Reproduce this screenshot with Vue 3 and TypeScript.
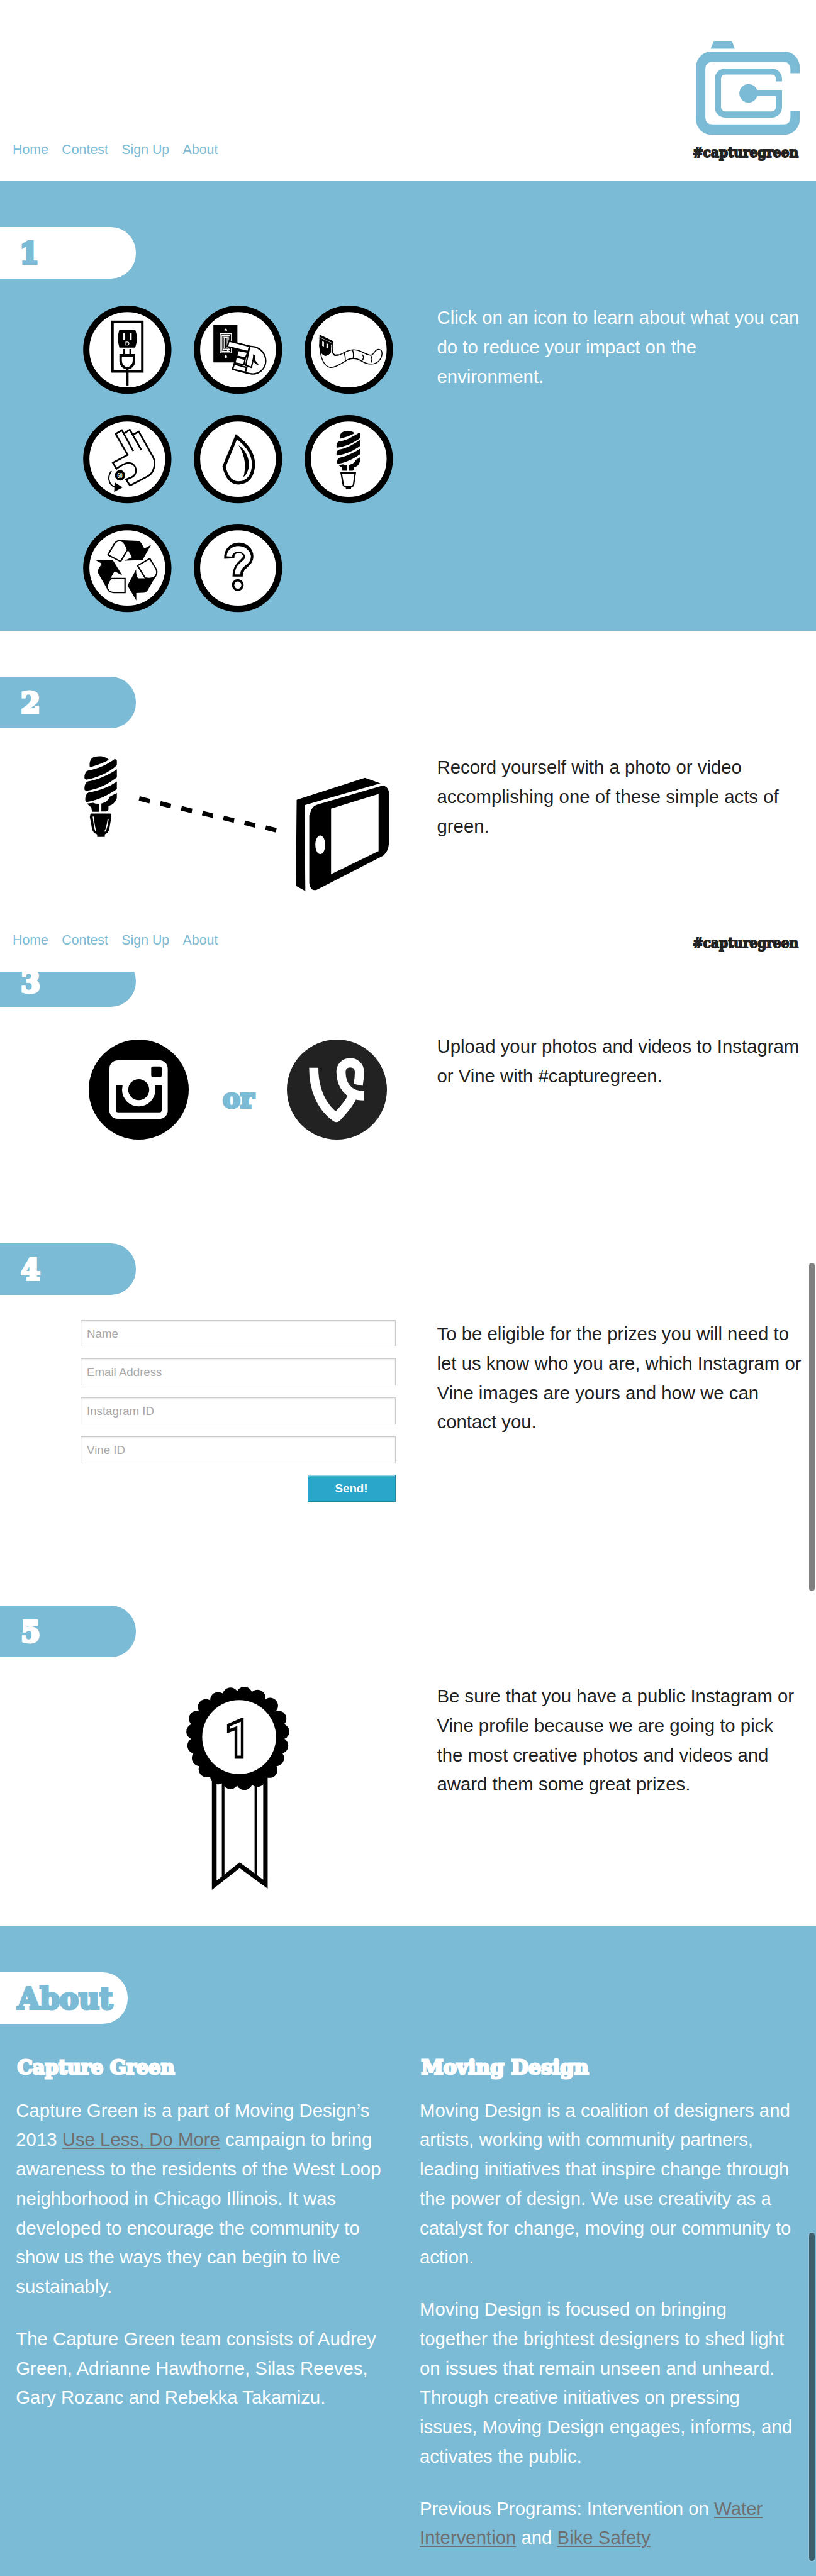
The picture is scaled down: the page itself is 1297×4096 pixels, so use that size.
<script setup lang="ts">
const nav: string[] = ['Home', 'Contest', 'Sign Up', 'About']
const fields: string[] = ['Name', 'Email Address', 'Instagram ID', 'Vine ID']

const copy = {
  act: 'Click on an icon to learn about what you can\ndo to reduce your impact on the\nenvironment.',
  record: 'Record yourself with a photo or video\naccomplishing one of these simple acts of\ngreen.',
  upload: 'Upload your photos and videos to Instagram\nor Vine with #capturegreen.',
  signup:
    'To be eligible for the prizes you will need to\nlet us know who you are, which Instagram or\nVine images are yours and how we can\ncontact you.',
  prize:
    'Be sure that you have a public Instagram or\nVine profile because we are going to pick\nthe most creative photos and videos and\naward them some great prizes.',
  team: 'The Capture Green team consists of Audrey\nGreen, Adrianne Hawthorne, Silas Reeves,\nGary Rozanc and Rebekka Takamizu.',
  coalition:
    'Moving Design is a coalition of designers and\nartists, working with community partners,\nleading initiatives that inspire change through\nthe power of design. We use creativity as a\ncatalyst for change, moving our community to\naction.',
  focus:
    'Moving Design is focused on bringing\ntogether the brightest designers to shed light\non issues that remain unseen and unheard.\nThrough creative initiatives on pressing\nissues, Moving Design engages, informs, and\nactivates the public.',
}

// Dashes of the line between the bulb and the phone
const dashes: number[] = [0, 1, 2, 3, 4, 5, 6]

// Centres of the scallops round the rosette
const scallops: [number, number][] = [
  [832, 562], [785, 597], [751, 654], [741, 718], [745, 787], [762, 848], [788, 903],
  [832, 938], [879, 961], [932, 966], [982, 950], [1028, 906], [1053, 848], [1069, 787],
  [1073, 718], [1062, 654], [1030, 590], [982, 551], [932, 536], [879, 540],
]
</script>

<template>
  <div class="page">
    <header class="top top--full">
      <nav class="nav">
        <a v-for="n in nav" :key="n">{{ n }}</a>
      </nav>
      <div class="brand">
        <svg class="logo" viewBox="174 111 744 671" preserveAspectRatio="none">
          <path d="M302 111H432L452 167H280Z" />
          <path
            d="M918 342H850V310Q848 264 804 262H290Q244 264 242 310V660Q244 706 290 708H804Q848 706 850 660V610H918V664C918 730 870 782 808 782H284C222 782 174 730 174 664V306C174 240 222 187 284 187H808C870 187 918 240 918 306Z"
          />
          <path
            d="M790 401H746V384Q746 354 716 352H385Q356 354 354 384V585Q356 613 385 615H716Q744 613 746 585V507H613A66 66 0 1 1 612 462H790V587C788 630 756 659 718 659H384C344 659 312 630 310 587V381C312 338 344 309 384 309H718C756 309 788 338 790 381Z"
          />
        </svg>
        <svg class="tag" width="172" height="34">
          <text class="slab dark" x="2" y="22" font-size="22.5" textLength="168" lengthAdjust="spacingAndGlyphs">#capturegreen</text>
        </svg>
      </div>
    </header>

    <section class="step step--one blue">
      <div class="pill pill--white">
        <svg width="216" height="81">
          <text class="slab" x="31" y="58" font-size="47" textLength="31" lengthAdjust="spacingAndGlyphs">1</text>
        </svg>
      </div>
      <div class="row">
        <div class="art icons">
          <svg class="icon" viewBox="37 58 424 412" preserveAspectRatio="none">
            <ellipse class="ring" cx="249" cy="264" rx="196.500" ry="191" />
            <rect class="line" x="178" y="134" width="143" height="231" stroke-width="12" />
            <path d="M211 170H287Q303 212 287 254H211Q197 212 211 170Z" />
            <path class="white" d="M230 186h9v32h-9zM261 186h9v32h-9z" />
            <path d="M242 228h10q5 2 5 7t-5 7h-10z" fill="none" stroke="#fff" stroke-width="3.500" />
            <path d="M230 261h9v28h-9zM259 261h9v28h-9z" />
            <path class="line" d="M217 290H281V316A32 34 0 0 1 217 316Z" stroke-width="12" />
            <path d="M243 350h12v81h-12z" />
          </svg>
          <svg class="icon" viewBox="566 58 424 412" preserveAspectRatio="none">
            <ellipse class="ring" cx="778" cy="264" rx="196.500" ry="191" />
            <path d="M660 147h115v176h-115z" />
            <circle class="white" cx="719" cy="172" r="6.500" />
            <circle class="white" cx="719" cy="297" r="6.500" />
            <path d="M715 176l8-8M715 301l8-8" stroke="#000" stroke-width="2.500" />
            <path d="M693 189h53v90h-53zM701 197h38v74h-38zM707 205h25v67M707 205v67M713 207h13v50h-13zM707 262h32M715 262v10M727 262v10" fill="none" stroke="#fff" stroke-width="3.500" />
            <path class="line" stroke-width="6.500" d="M735 224L833 248Q848 250 858 251C892 260 911 288 911 318C909 352 882 377 848 377Q835 377 752 355L779 266L826 273L727 249Z" />
            <path class="line" stroke-width="6.500" d="M735 224L833 248L826 273L727 249ZM779 267L825 276L813 303L771 293ZM769 298L812 309L806 334L763 326ZM760 331L820 347L813 369L752 355Z" />
            <path class="line" stroke-width="6.500" d="M834 248L815 337L842 346L856 288Q848 325 875 332" />
            <path d="M815 345L821 347L816 370L809 369ZM850 286l8 3q-3 28 18 42l-4 3q-18-8-22-22z" />
          </svg>
          <svg class="icon" viewBox="1095 58 424 412" preserveAspectRatio="none">
            <ellipse class="ring" cx="1307" cy="264" rx="196.500" ry="191" />
            <path class="line" stroke-width="4.500" d="M1228 235C1224 275 1232 298 1262 288C1290 277 1312 258 1350 267C1380 275 1398 293 1416 289C1430 285 1430 262 1450 262C1475 264 1468 300 1450 318C1430 336 1395 334 1370 318C1345 302 1315 300 1290 318C1260 336 1235 350 1215 346C1180 336 1170 290 1168 240" />
            <path class="line" stroke-width="4.500" d="M1283 277Q1292 292 1290 318M1325 265Q1332 285 1328 303M1370 285Q1386 300 1368 318M1412 291Q1423 307 1413 325" />
            <path d="M1167 193L1233 224L1230 236L1222 240V276Q1208 293 1193 293Q1168 284 1165 245Z" />
            <path d="M1170 207L1226 233" stroke="#fff" stroke-width="2" />
            <path d="M1230 228C1228 275 1232 290 1248 286L1262 285Q1246 298 1234 290Q1224 280 1224 240Z" />
            <path class="white" d="M1180 225l8 3v21l-8-3zM1200 234l8 3v21l-8-3z" />
          </svg>
          <svg class="icon" viewBox="37 567 424 412" preserveAspectRatio="none">
            <ellipse class="ring" cx="249" cy="773" rx="196.500" ry="191" />
            <path class="line" stroke-width="8" d="M278 735L223 638L193 655L251 753L180 790L197 818Q238 788 259 791C298 796 300 845 270 857L243 868L262 896L345 854C378 838 388 790 372 762L304 644L277 658" />
            <path class="line" stroke-width="8" d="M235 652L261 635L316 730" />
            <circle cx="214" cy="849" r="24.500" />
            <text x="201" y="861" font-size="32" font-weight="700" fill="#fff" textLength="25" lengthAdjust="spacingAndGlyphs">60</text>
            <circle cx="229" cy="841" r="1.500" fill="#fff" />
            <path class="line" stroke-width="6" d="M173 828C152 855 158 892 190 904" />
            <path d="M188 881L226 905L186 926Z" />
          </svg>
          <svg class="icon" viewBox="566 567 424 412" preserveAspectRatio="none">
            <ellipse class="ring" cx="778" cy="773" rx="196.500" ry="191" />
            <path class="line" stroke-width="15" d="M770 668L711 808C725 865 750 884 780 884C828 883 852 845 852 795C850 740 815 702 770 668Z" />
            <path d="M781 708C838 745 845 825 804 857C817 812 815 760 781 708Z" />
          </svg>
          <svg class="icon" viewBox="1095 567 424 412" preserveAspectRatio="none">
            <ellipse class="ring" cx="1307" cy="773" rx="196.500" ry="191" />
            <path d="M1266 677C1265 658 1267 651 1278 646C1295 637 1325 640 1335 652C1315 663 1290 671 1266 677Z" />
            <path d="M1248 716C1248 700 1254 691 1262 690C1300 685 1330 665 1356 650L1361 653V675C1330 697 1290 715 1252 719Z" />
            <path d="M1248 753C1248 738 1254 729 1262 728C1300 722 1335 700 1361 684V711C1330 735 1290 750 1252 756Z" />
            <path d="M1251 791C1251 775 1256 767 1264 766C1300 758 1335 740 1361 724V750C1330 772 1290 790 1255 795Z" />
            <path d="M1361 764V780C1358 798 1348 808 1333 810V820Q1332 827 1325 827H1308V800C1325 796 1335 790 1338 778C1345 775 1352 770 1361 764Z" />
            <path d="M1257 801L1282 797L1290 803L1300 800V827H1277Q1275 820 1274 812Z" />
            <path class="line" stroke-width="7" d="M1271 838H1338L1330 892Q1326 902 1318 902H1292Q1282 902 1280 890Z" />
            <path d="M1293 902h25v10h-25zM1268 834h72v8h-72z" />
          </svg>
          <svg class="icon" viewBox="37 1077 424 412" preserveAspectRatio="none">
            <ellipse class="ring" cx="249" cy="1283" rx="196.500" ry="191" />
            <path class="line" stroke-width="6.500" d="M156 1222L187 1170Q200 1153 220 1156Q238 1162 250 1198L217 1253Z" />
            <path d="M212 1153L298 1156Q312 1158 318 1170L331 1192L363 1175L322 1246L236 1249L271 1233L250 1195Q238 1165 212 1153Z" />
            <path class="line" stroke-width="6.500" d="M172 1332H238V1398H182Q155 1396 152 1368Q158 1345 172 1332Z" />
            <path d="M95 1245L180 1247L225 1318L188 1298Q165 1335 154 1362Q152 1380 158 1390L112 1312Q105 1300 112 1285L127 1263Z" />
            <path class="line" stroke-width="6.500" d="M298 1272L357 1239L388 1290Q396 1310 378 1328Q360 1335 335 1330Z" />
            <path d="M250 1365L291 1290Q291 1330 303 1331H350Q378 1330 392 1310L348 1385Q340 1399 325 1399L292 1400V1435Z" />
          </svg>
          <svg class="icon" viewBox="566 1077 424 412" preserveAspectRatio="none">
            <ellipse class="ring" cx="778" cy="1283" rx="196.500" ry="191" />
            <path d="M736 1239C732 1172 826 1175 827 1229C828 1262 776 1262 776 1323" fill="none" stroke="#000" stroke-width="49" />
            <path d="M736.500 1229C740 1182 817 1182 827 1229C828 1262 776 1262 776 1313" fill="none" stroke="#fff" stroke-width="26" />
            <circle class="line" cx="777" cy="1363" r="22.500" stroke-width="11" />
          </svg>
        </div>
        <p class="text">{{ copy.act }}</p>
      </div>
    </section>

    <section class="step step--two">
      <div class="pill">
        <svg width="216" height="81">
          <text class="slab" x="33" y="58" font-size="47" textLength="31" lengthAdjust="spacingAndGlyphs">2</text>
        </svg>
      </div>
      <div class="row">
        <div class="art art--record">
          <svg width="484" height="215" viewBox="322 600 1160 872" preserveAspectRatio="none">
            <path d="M343 673C340 640 345 612 362 605C385 597 405 605 415 624C395 645 365 662 343 673Z" />
            <path d="M323 745C321 720 328 696 336 694C375 682 410 655 438 619L446 626V660C415 710 365 745 328 753Z" />
            <path d="M323 818C321 790 328 767 336 764C375 752 415 722 446 686V738C415 780 370 818 328 825Z" />
            <path d="M326 888C324 860 332 837 340 835C380 822 415 800 446 765V814C415 850 370 890 330 897Z" />
            <path d="M332 907L356 902Q367 910 378 908V960H353Q349 950 349 933Z" />
            <path d="M387 907Q413 895 419 863L446 838V872Q437 915 414 922V945Q413 957 405 958H387Z" />
            <path d="M346 971H422L425 993L417 1075Q412 1100 400 1106V1122H371V1106Q354 1097 351 1065L343 993Z" />
            <path d="M356 990Q360 1060 366 1086M413 1005Q408 1070 400 1088" fill="none" stroke="#fff" stroke-width="4" />
            <path
              v-for="d in dashes"
              :key="d"
              d="M533 860L573 877L570 906L529 889Z"
              :transform="`translate(${d * 80.3} ${d * 31.3})`"
            />
            <path d="M1131 883L1391 741L1450 776L1161 917L1164 1471L1128 1438Z" />
            <path d="M1182 970Q1188 925 1207 915L1455 793Q1477 790 1482 830V1170Q1480 1215 1460 1244L1208 1463Q1183 1475 1179 1420V985Z" />
            <path class="white" d="M1262 940L1443 845V1213L1262 1362Z" />
            <ellipse class="white" cx="1221" cy="1173" rx="19" ry="60" />
          </svg>
        </div>
        <p class="text">{{ copy.record }}</p>
      </div>
    </section>

    <header class="top top--slim">
      <nav class="nav">
        <a v-for="n in nav" :key="n">{{ n }}</a>
      </nav>
      <div class="brand">
        <svg class="tag" width="172" height="34">
          <text class="slab dark" x="2" y="22" font-size="22.5" textLength="168" lengthAdjust="spacingAndGlyphs">#capturegreen</text>
        </svg>
      </div>
    </header>

    <section class="step step--three">
      <div class="pill">
        <svg width="216" height="81">
          <text class="slab" x="33" y="58" font-size="47" textLength="31" lengthAdjust="spacingAndGlyphs">3</text>
        </svg>
      </div>
      <div class="row">
        <div class="art art--upload">
          <svg width="159" height="159" viewBox="339 831 381 621" preserveAspectRatio="none">
            <ellipse cx="529.500" cy="1141.500" rx="190.500" ry="310.500" />
            <rect class="white" x="418" y="960" width="222" height="363" rx="31" ry="50" />
            <rect x="577" y="998" width="40" height="66" rx="7" ry="10" />
            <path d="M442 1116H617V1268Q616 1283 608 1283H451Q443 1283 442 1268Z" />
            <ellipse class="white" cx="529.500" cy="1142" rx="63.500" ry="104" />
            <ellipse cx="529.500" cy="1142" rx="40" ry="65" />
          </svg>
          <svg class="or" width="54" height="60">
            <text class="slab" x="2" y="41" font-size="43" textLength="50" lengthAdjust="spacingAndGlyphs">or</text>
          </svg>
          <svg width="159" height="159" viewBox="0 0 238.500 238.500">
            <circle cx="119.250" cy="119.250" r="119.250" fill="#222" />
            <path
              d="M64 67C64 115 80 160 118 186C140 162 150 150 158 132M184 134C146 134 129 108 129 77C129 48 173 48 173 77C173 90 172 98 170 108"
              fill="none"
              stroke="#fff"
              stroke-width="22"
              stroke-linejoin="round"
            />
            <path d="M160 119L184 124V142H164Z" fill="#fff" />
          </svg>
        </div>
        <p class="text">{{ copy.upload }}</p>
      </div>
    </section>

    <section class="step step--four">
      <div class="pill">
        <svg width="216" height="81">
          <text class="slab" x="33" y="58" font-size="47" textLength="31" lengthAdjust="spacingAndGlyphs">4</text>
        </svg>
      </div>
      <div class="row">
        <form class="art form" @submit.prevent>
          <input v-for="f in fields" :key="f" type="text" :placeholder="f" />
          <button type="submit">Send!</button>
        </form>
        <p class="text">{{ copy.signup }}</p>
      </div>
    </section>

    <section class="step step--five">
      <div class="pill">
        <svg width="216" height="81">
          <text class="slab" x="33" y="58" font-size="47" textLength="31" lengthAdjust="spacingAndGlyphs">5</text>
        </svg>
      </div>
      <div class="row">
        <div class="art art--prize">
          <svg width="164" height="323" viewBox="710 497 394 999" preserveAspectRatio="none">
            <path d="M808 940V1496L914 1389L1021 1490V940H1004V1446L914 1361L826 1450V940Z" />
            <path d="M846 940h10v490h-10zM971 940h10v487h-10z" />
            <ellipse v-for="(s, i) in scallops" :key="i" :cx="s[0]" :cy="s[1]" rx="30.500" ry="39" />
            <ellipse cx="908" cy="751" rx="168" ry="216" />
            <ellipse class="white" cx="912" cy="744.500" rx="141" ry="182" />
            <text class="medal" transform="translate(857 843) scale(.66 1)" font-size="258">1</text>
          </svg>
        </div>
        <p class="text">{{ copy.prize }}</p>
      </div>
    </section>

    <section class="about blue">
      <div class="pill pill--white pill--about">
        <svg width="203" height="81">
          <text class="slab" x="28" y="57.500" font-size="47" textLength="151" lengthAdjust="spacingAndGlyphs">About</text>
        </svg>
      </div>
      <div class="columns">
        <div class="column">
          <svg class="title" width="300" height="40">
            <text class="slab slab--title" x="2.500" y="29" font-size="31.500" textLength="250" lengthAdjust="spacingAndGlyphs">Capture Green</text>
          </svg>
          <p>Capture Green is a part of Moving Design’s<br />2013 <a>Use Less, Do More</a> campaign to bring<br />awareness to the residents of the West Loop<br />neighborhood in Chicago Illinois. It was<br />developed to encourage the community to<br />show us the ways they can begin to live<br />sustainably.</p>
          <p>{{ copy.team }}</p>
        </div>
        <div class="column">
          <svg class="title" width="300" height="40">
            <text class="slab slab--title" x="2.500" y="29" font-size="31.500" textLength="266" lengthAdjust="spacingAndGlyphs">Moving Design</text>
          </svg>
          <p>{{ copy.coalition }}</p>
          <p>{{ copy.focus }}</p>
          <p>Previous Programs: Intervention on <a>Water<br />Intervention</a> and <a>Bike Safety</a></p>
        </div>
      </div>
    </section>

    <i class="thumb thumb--mid"></i>
    <i class="thumb thumb--end"></i>
  </div>
</template>

<style>
body {
  margin: 0;
}
</style>

<style scoped>
.page {
  position: relative;
  width: 1297px;
  height: 4096px;
  overflow: hidden;
  background: #fff;
  color: #222;
  font-family: 'Liberation Sans', Arial, sans-serif;
}
svg {
  display: block;
  flex: none;
  overflow: visible;
}
svg text {
  font-family: 'Liberation Sans', Arial, sans-serif;
}
svg text.slab {
  font-family: 'DejaVu Serif', serif;
  font-weight: 700;
  fill: #fff;
  stroke: #fff;
  stroke-width: 4px;
}
svg text.slab--title {
  stroke-width: 3px;
}
svg text.dark {
  fill: #222;
  stroke: #222;
  stroke-width: 1.9px;
}
.white {
  fill: #fff;
}
.line {
  fill: #fff;
  stroke: #000;
}

.top {
  display: flex;
  justify-content: space-between;
  align-items: flex-end;
  box-sizing: border-box;
  padding: 0 26px 0 20px;
}
.top--full {
  height: 288px;
}
.top--slim {
  height: 99px;
}
.nav {
  display: flex;
  gap: 21.4px;
  padding-bottom: 38px;
  font-size: 21.35px;
  line-height: 24px;
  color: #7bbbd6;
}
.brand {
  display: flex;
  flex-direction: column;
  align-items: flex-end;
  padding-bottom: 26px;
}
.logo {
  width: 165.500px;
  height: 149.300px;
  fill: #7bbbd6;
  margin-bottom: 14px;
}

.blue {
  background: #7bbbd6;
  color: #fff;
}
.step {
  box-sizing: border-box;
  padding-top: 73.400px;
}
.step--one {
  height: 715px;
}
.step--two {
  height: 443px;
}
.step--three {
  height: 359px;
  padding-top: 0;
  overflow: hidden;
}
.step--three .pill {
  margin-top: -25px;
}
.step--four {
  height: 576px;
}
.step--five {
  height: 583px;
}
.pill {
  width: 216px;
  height: 81.300px;
  border-radius: 0 40px 40px 0;
  background: #7bbbd6;
}
.pill--white {
  background: #fff;
}
.pill--about {
  width: 203px;
}
.pill--white .slab,
.or .slab {
  fill: #7bbbd6;
  stroke: #7bbbd6;
}

.row {
  display: flex;
  align-items: flex-start;
}
.art {
  box-sizing: border-box;
  flex: none;
  width: 694.500px;
}
.text {
  margin: 39.700px 0 0;
  font-size: 29.350px;
  line-height: 46.700px;
  white-space: pre;
}

.icons {
  display: grid;
  grid-template-columns: repeat(3, 140.700px);
  gap: 33.300px 34.900px;
  padding: 43.800px 0 0 132.400px;
}
.icon {
  width: 140.700px;
  height: 140.200px;
}
.ring {
  fill: #fff;
  stroke: #000;
  stroke-width: 30px;
}
.art--record {
  padding: 44px 0 0 134.300px;
}
.art--upload {
  display: flex;
  padding: 52px 0 0 141.300px;
}
.or {
  margin: 67px 50px 0 51.500px;
}

.form {
  display: flex;
  flex-direction: column;
  gap: 18.900px;
  padding: 40px 66px 0 128px;
}
.form input {
  box-sizing: border-box;
  width: 100%;
  height: 42.800px;
  padding: 1px 9px 0;
  border: 1.330px solid #ccc;
  border-radius: 0;
  background: #fff;
  box-shadow: inset 0 1.300px 2.600px rgba(0, 0, 0, 0.1);
  font: 18.700px 'Liberation Sans', Arial, sans-serif;
}
.form input::placeholder {
  color: #a9a9a9;
  opacity: 1;
}
.form button {
  box-sizing: border-box;
  align-self: flex-end;
  width: 140px;
  height: 42.800px;
  padding: 0;
  border: 1.330px solid #2284a1;
  border-radius: 0;
  background: #2ba6cb;
  box-shadow: inset 0 1.300px 0 rgba(255, 255, 255, 0.5);
  color: #fff;
  font: 700 18.700px 'Liberation Sans', Arial, sans-serif;
}
.art--prize {
  padding: 47.400px 0 0 296px;
}
svg text.medal {
  font-family: Roboto, sans-serif;
  font-weight: 700;
  fill: #fff;
  stroke: #000;
  stroke-width: 16px;
}

.about {
  box-sizing: border-box;
  height: 1033px;
  padding-top: 73.400px;
}
.columns {
  display: flex;
}
.column {
  box-sizing: border-box;
  width: 641.700px;
  padding: 51px 0 0 25.300px;
}
.column p {
  margin: 0 0 36.300px;
  font-size: 29.350px;
  line-height: 46.700px;
  white-space: pre;
}
.title {
  margin-bottom: 24px;
}
.column a {
  color: #6f6f6f;
  text-decoration: underline;
  text-decoration-thickness: 2px;
  text-underline-offset: 3px;
}

.thumb {
  position: absolute;
  right: 2px;
  width: 9.300px;
  border-radius: 5px;
}
.thumb--mid {
  top: 2008px;
  height: 522px;
  background: #808080;
}
.thumb--end {
  top: 3549.500px;
  height: 522.500px;
  background: #3d5e6b;
  box-shadow: 0 0 0 1px rgba(255, 255, 255, 0.18);
}
</style>
